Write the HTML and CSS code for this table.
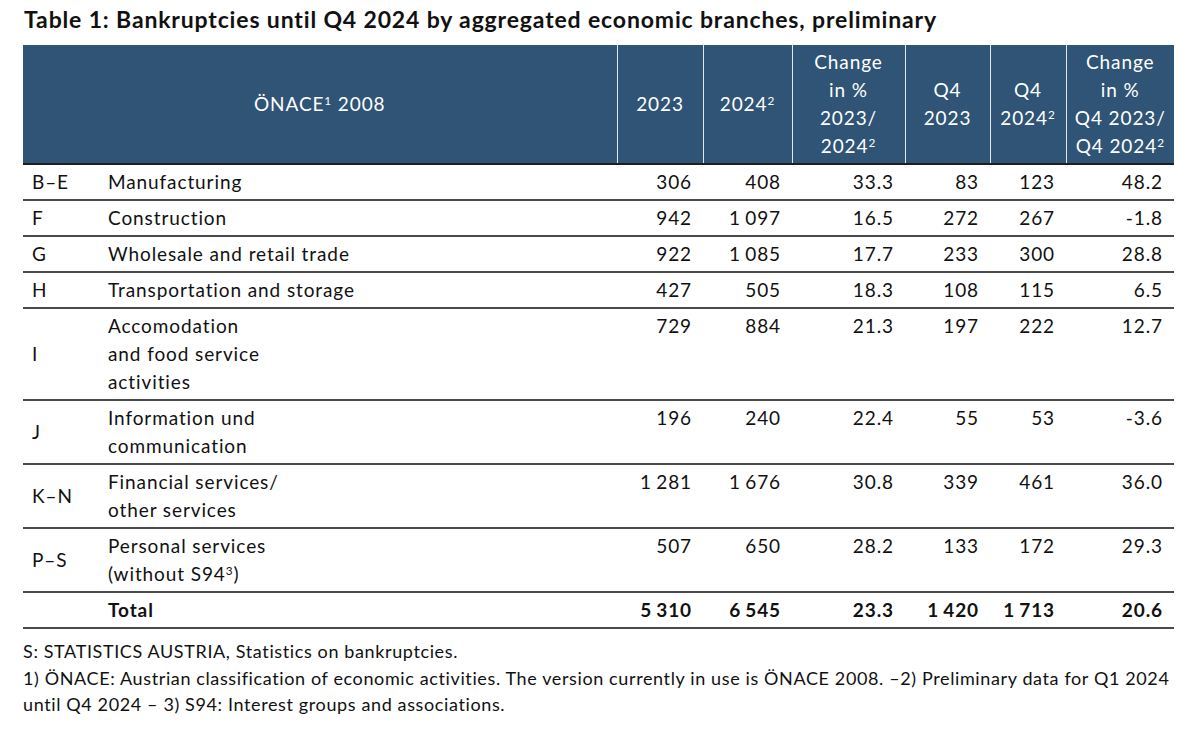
FILE: index.html
```html
<!DOCTYPE html>
<html lang="en">
<head>
<meta charset="utf-8">
<title>Bankruptcies Table</title>
<link rel="stylesheet" href="styles.css">
</head>
<body>
<div class="page">
  <h1 class="title">Table 1: Bankruptcies until Q4 2024 by aggregated economic branches, preliminary</h1>
  <table class="data">
    <colgroup>
      <col class="c-code"><col class="c-desc"><col class="c-y23"><col class="c-y24"><col class="c-chg"><col class="c-q23"><col class="c-q24"><col class="c-qchg">
    </colgroup>
    <thead>
      <tr>
        <th colspan="2" class="h-first">ÖNACE<sup>1</sup> 2008</th>
        <th>2023</th>
        <th>2024<sup>2</sup></th>
        <th>Change<br>in %<br>2023/<br>2024<sup>2</sup></th>
        <th>Q4<br>2023</th>
        <th>Q4<br>2024<sup>2</sup></th>
        <th>Change<br>in %<br>Q4 2023/<br>Q4 2024<sup>2</sup></th>
      </tr>
    </thead>
    <tbody>
      <tr><td class="code">B–E</td><td class="desc">Manufacturing</td><td>306</td><td>408</td><td>33.3</td><td>83</td><td>123</td><td>48.2</td></tr>
      <tr><td class="code">F</td><td class="desc">Construction</td><td>942</td><td>1 097</td><td>16.5</td><td>272</td><td>267</td><td>-1.8</td></tr>
      <tr><td class="code">G</td><td class="desc">Wholesale and retail trade</td><td>922</td><td>1 085</td><td>17.7</td><td>233</td><td>300</td><td>28.8</td></tr>
      <tr><td class="code">H</td><td class="desc">Transportation and storage</td><td>427</td><td>505</td><td>18.3</td><td>108</td><td>115</td><td>6.5</td></tr>
      <tr><td class="code">I</td><td class="desc">Accomodation<br>and food service<br>activities</td><td>729</td><td>884</td><td>21.3</td><td>197</td><td>222</td><td>12.7</td></tr>
      <tr><td class="code">J</td><td class="desc">Information und<br>communication</td><td>196</td><td>240</td><td>22.4</td><td>55</td><td>53</td><td>-3.6</td></tr>
      <tr><td class="code">K–N</td><td class="desc">Financial services/<br>other services</td><td>1 281</td><td>1 676</td><td>30.8</td><td>339</td><td>461</td><td>36.0</td></tr>
      <tr><td class="code">P–S</td><td class="desc">Personal services<br>(without S94<sup>3</sup>)</td><td>507</td><td>650</td><td>28.2</td><td>133</td><td>172</td><td>29.3</td></tr>
      <tr class="total"><td class="code"></td><td class="desc">Total</td><td>5 310</td><td>6 545</td><td>23.3</td><td>1 420</td><td>1 713</td><td>20.6</td></tr>
    </tbody>
  </table>
  <div class="notes">
    <p>S: STATISTICS AUSTRIA, Statistics on bankruptcies.</p>
    <p>1) ÖNACE: Austrian classification of economic activities. The version currently in use is ÖNACE 2008. –2) Preliminary data for Q1 2024<br>until Q4 2024 – 3) S94: Interest groups and associations.</p>
  </div>
</div>
</body>
</html>
```

FILE: styles.css
```css
html, body {
  margin: 0;
  padding: 0;
  background: #ffffff;
}
body {
  font-family: "Lato", "Open Sans", sans-serif;
  color: #111111;
}
.page {
  padding: 4px 0 0 23px;
}
.title {
  margin: 0 0 11px 1px;
  font-size: 23px;
  letter-spacing: 0.85px;
  line-height: 30px;
  font-weight: 700;
  color: #111111;
}
.data {
  border-collapse: collapse;
  table-layout: fixed;
  width: 1151px;
  font-size: 19px;
  letter-spacing: 0.9px;
}
.c-code { width: 75px; }
.c-desc { width: 519px; }
.c-y23 { width: 86px; }
.c-y24 { width: 89px; }
.c-chg { width: 113px; }
.c-q23 { width: 85px; }
.c-q24 { width: 76px; }
.c-qchg { width: 108px; }

.data thead th {
  background: #2f5475;
  color: #ffffff;
  font-weight: 400;
  text-align: center;
  vertical-align: middle;
  line-height: 28px;
  padding: 3px 0;
  height: 112px;
  border-left: 1px solid #e3e7ec;
  border-bottom: 2px solid #1e1e1e;
  white-space: nowrap;
}
.data thead th.h-first {
  border-left: none;
}
sup {
  font-size: 0.62em;
  line-height: 0;
  vertical-align: 0.5em;
}
.data tbody td {
  line-height: 28px;
  padding: 3px 11px 3px 0;
  text-align: right;
  vertical-align: top;
  border-bottom: 2px solid #4a4a4a;
  white-space: nowrap;
  word-spacing: -1.5px;
}
.data tbody td.code {
  text-align: left;
  vertical-align: middle;
  padding-left: 9px;
  padding-right: 0;
  word-spacing: 0;
}
.data tbody td.desc {
  text-align: left;
  padding-left: 10px;
  word-spacing: 0;
}
.data tbody tr.total td {
  font-weight: 700;
}
.notes {
  margin-top: 9px;
  font-size: 18px;
  letter-spacing: 0.62px;
  line-height: 26.5px;
}
.notes p {
  margin: 0;
}
```
